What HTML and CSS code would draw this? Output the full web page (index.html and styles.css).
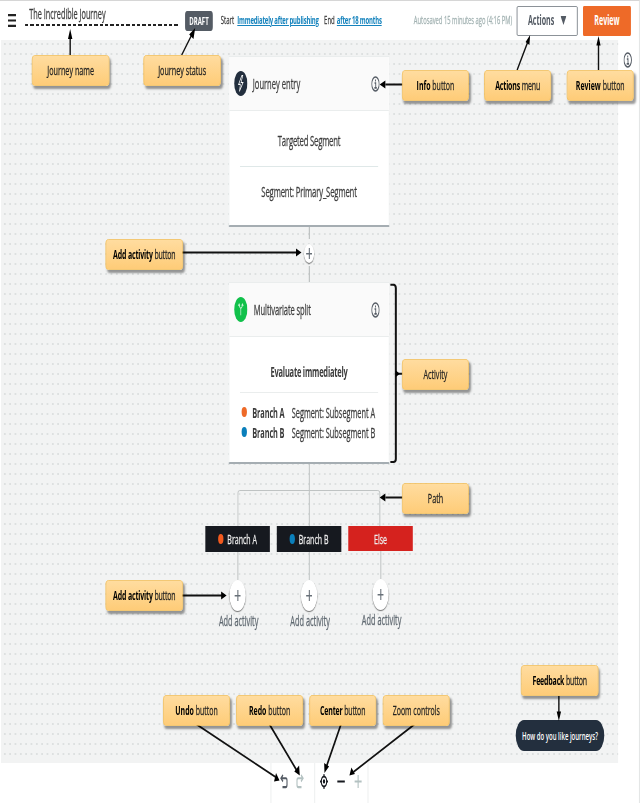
FILE: index.html
```html
<!DOCTYPE html>
<html lang="en">
<head>
<meta charset="utf-8">
<title>The Incredible Journey</title>
<link rel="stylesheet" href="styles.css">
</head>
<body>
<div class="frame">
<div class="stage">
  <header class="topbar">
    <svg class="menu" viewBox="0 0 15 12" preserveAspectRatio="none"><path d="M0 1h15M0 6h15M0 11h15"/></svg>
    <div class="name"><span class="t t-title">The Incredible Journey</span></div>
    <div class="status"><span class="t t-draft">DRAFT</span></div>
    <div class="schedule"><span class="t t-start">Start</span><a class="t t-imm">Immediately after publishing</a><span class="t t-end">End</span><a class="t t-after">after 18 months</a></div>
    <div class="saved"><span class="t t-saved">Autosaved 15 minutes ago (4:16 PM)</span></div>
    <button class="btn actions"><span class="t t-actions">Actions</span><svg class="caret" viewBox="0 0 12 9" preserveAspectRatio="none"><path d="M0 0h12L6 9z"/></svg></button>
    <button class="btn review"><span class="t t-review">Review</span></button>
  </header>

  <main class="canvas">
    <section class="card entry">
      <div class="card-head">
        <svg class="badge" viewBox="0 0 24 24"><circle cx="12" cy="12" r="12" fill="#232f3e"/><path d="M13.800 4.500 8 12.800h3.200L9.600 19.500 16 11h-3.500l3-6.500z" fill="none" stroke="#fff" stroke-width="1.100"/></svg>
        <span class="t t-entry">Journey entry</span>
        <svg class="info" viewBox="0 0 16 16"><circle cx="8" cy="8" r="7"/><path d="M6.300 7H8.500v4.700M6 11.800h4.500M8 3.600v1.800"/></svg>
      </div>
      <div class="row target"><span class="t t-target">Targeted Segment</span></div>
      <div class="row segment"><span class="t t-segment">Segment: Primary_Segment</span></div>
    </section>
    <div class="joint"><i class="plus small"></i></div>
    <section class="card split">
      <div class="card-head">
        <svg class="badge" viewBox="0 0 24 24"><circle cx="12" cy="12" r="12" fill="#11c14b"/><path d="M12 17.500V11M12 11C11 10.500 9.500 10.500 9 7.500M12 11c1-.5 2.500-.5 3-3.500M7.500 8.500 9 6.800l1.500 1.500M16.500 8.500 15 6.800l-1.500 1.500" fill="none" stroke="#c9f5d6" stroke-width="1.300"/></svg>
        <span class="t t-multi">Multivariate split</span>
        <svg class="info" viewBox="0 0 16 16"><circle cx="8" cy="8" r="7"/><path d="M6.300 7H8.500v4.700M6 11.800h4.500M8 3.600v1.800"/></svg>
      </div>
      <div class="row evaluate"><span class="t t-eval">Evaluate immediately</span></div>
      <ul class="branches">
        <li><i class="dot orange"></i><b class="t t-branch">Branch A</b><span class="t t-sub">Segment: Subsegment A</span></li>
        <li><i class="dot blue"></i><b class="t t-branch">Branch B</b><span class="t t-sub">Segment: Subsegment B</span></li>
      </ul>
    </section>
    <svg class="paths" viewBox="0 0 144 62" preserveAspectRatio="none"><path d="M.5 62V29Q.5 26.500 2.500 26.500H140.500Q142.500 26.500 142.500 29V62M72 0V62"/></svg>
    <div class="outcomes">
      <div class="outcome"><div class="tag"><i class="dot bright"></i><span class="t t-tag">Branch A</span></div><i class="stem"></i><i class="plus"></i><span class="t t-add">Add activity</span></div>
      <div class="outcome"><div class="tag"><i class="dot blue"></i><span class="t t-tag">Branch B</span></div><i class="stem"></i><i class="plus"></i><span class="t t-add">Add activity</span></div>
      <div class="outcome"><div class="tag else"><span class="t t-else">Else</span></div><i class="stem"></i><i class="plus"></i><span class="t t-add">Add activity</span></div>
    </div>
  </main>

  <svg class="info side" viewBox="0 0 16 16"><circle cx="8" cy="8" r="7"/><path d="M6.300 7H8.500v4.700M6 11.800h4.500M8 3.600v1.800"/></svg>

  <footer class="tools">
    <div class="history">
      <svg class="tool" viewBox="0 0 16 16"><path d="M6 1 2 4.500 6 8M2.500 4.500H11.500Q14 4.500 14 7V11.500Q14 14 11.500 14H5" stroke="#545b64"/></svg>
      <svg class="tool" viewBox="0 0 16 16"><path d="M10 1 14 4.500 10 8M13.500 4.500H4.500Q2 4.500 2 7V11.500Q2 14 4.500 14H11" stroke="#b3c1c1"/></svg>
    </div>
    <div class="view">
      <svg class="tool" viewBox="0 0 16 16"><circle cx="8" cy="8" r="5.400" stroke="#16191f"/><circle cx="8" cy="8" r="1.200" fill="#16191f" stroke="#16191f"/><path d="M8 0v3M8 13v3M0 8h3M13 8h3" stroke="#16191f"/></svg>
      <svg class="tool" viewBox="0 0 16 16"><path d="M.5 8h15" stroke="#16191f"/></svg>
      <svg class="tool" viewBox="0 0 16 16"><path d="M1 8h14M8 1v14" stroke="#b3c1c1"/></svg>
    </div>
  </footer>

  <div class="feedback"><span class="t t-fb">How do you like journeys?</span></div>

  <svg class="arrows" viewBox="0 0 640 803" preserveAspectRatio="none">
    <path d="M70.300 55V36M182 55 192.500 34M518 70 529 41M599.500 70V42"/>
    <path d="M559.800 696V714"/>
    <path class="thick" d="M403 84.500H386M182 252.500H298M182 595.500H225M403 497.500H386"/>
    <path class="mid" d="M197 724.500 276 777M270 724.500 297 770M341.500 724.500 326.500 768M415 724.500 354 772"/>
    <path class="thick" d="M391 284.800H394Q396.500 285 396.500 288V459Q396.500 462 394 462H391M396.500 373.700H403"/>
    <path class="tip" d="M70.300 29 72.500 39H68.100zM195.500 28 193.800 39 189.500 34.500zM531 35 530.300 45 526.500 42zM599.500 36 601.600 45.500H597.400zM559.800 721 557.600 711.500H562zM380.300 84.500 386 80.500V88.500zM302 252.500 296.500 248.500V256.500zM227 595.500 221.500 591.500V599.500zM380.300 497.500 386 493.500V501.500zM280 780.500 274.500 781.500 276.500 773zM300.300 775.500 294.800 771.500 299.600 765.500zM325 773 324.700 763 329.600 766.500zM350 775.500 352 767.500 355.500 774z"/>
    <path class="tip" d="M396.500 370.500 400.500 373.700 396.500 377z"/>
  </svg>

  <div class="note plain w2 n-name"><span class="t">Journey name</span></div>
  <div class="note plain w2 n-status"><span class="t">Journey status</span></div>
  <div class="note n-info"><span class="t"><b>Info</b> button</span></div>
  <div class="note snug n-actions"><span class="t"><b>Actions</b> menu</span></div>
  <div class="note n-review"><span class="t"><b>Review</b> button</span></div>
  <div class="note snug w2 n-add1"><span class="t"><b>Add activity</b> button</span></div>
  <div class="note plain n-activity"><span class="t">Activity</span></div>
  <div class="note plain n-path"><span class="t">Path</span></div>
  <div class="note snug w2 n-add2"><span class="t"><b>Add activity</b> button</span></div>
  <div class="note n-undo"><span class="t"><b>Undo</b> button</span></div>
  <div class="note n-redo"><span class="t"><b>Redo</b> button</span></div>
  <div class="note snug n-center"><span class="t"><b>Center</b> button</span></div>
  <div class="note n-zoom"><span class="t">Zoom controls</span></div>
  <div class="note snug w2 n-feedback"><span class="t"><b>Feedback</b> button</span></div>
</div>
</div>
</body>
</html>
```
FILE: styles.css
```css
* { box-sizing: border-box; }
body { margin: 0; background: #fff; }
.frame { width: 640px; height: 803px; overflow: clip; contain: paint; }

/* The whole view is drawn 1200px wide and condensed to 640px. */
.stage {
  position: relative;
  width: 1200px;
  height: 803px;
  transform: scaleX(.533333);
  transform-origin: 0 0;
  border-top: 1px solid #d6d6d6;
  border-right: 2px solid #e4e6e6;
  font-family: "Open Sans", "Noto Sans", sans-serif;
  color: #3c3c3c;
}
.t { white-space: nowrap; -webkit-text-stroke: .28px currentColor; }
b.t, a.t, .t b, .btn .t, .status .t, .evaluate .t, .t-fb { -webkit-text-stroke-width: 0; }

.topbar { display: flex; align-items: center; height: 39px; padding-left: 15px; }
.menu { width: 15px; height: 13px; stroke: #222; stroke-width: 2; }
.name {
  width: 287px; height: 22px; margin: -12px 0 0 17px; padding-left: 8px;
  font-size: 13.700px; line-height: 18px;
  background: repeating-linear-gradient(90deg, #222 0 6px, transparent 6px 10px) 0 100% / 100% 2px no-repeat;
}
.name .t { position: relative; top: 1px; }
.status {
  display: flex; align-items: center; justify-content: center;
  width: 52px; height: 20px; margin-left: 13px; padding-bottom: 1px;
  border-radius: 4px; background: #545b64; color: #fff; font-size: 11.400px; font-weight: 700;
}
.schedule { display: flex; gap: 4px; width: 302px; margin-left: 15px; padding-bottom: 2px; font-size: 11.200px; line-height: 14px; }
.schedule a { color: #1583bd; font-weight: 700; text-decoration: underline; letter-spacing: -.35px; }
.t-imm { margin-left: 2px; }
.t-end { margin-left: 6px; }
.saved { width: 186px; margin-left: 60px; padding-bottom: 2px; color: #a2b2b2; font-size: 10.900px; }
.btn {
  display: flex; align-items: center; justify-content: center; height: 30px; padding: 0 0 1px;
  border: 0; border-radius: 2px; font: 700 13.300px "Open Sans", sans-serif;
}
.actions { width: 114px; margin-left: 7px; gap: 12px; border: 1.500px solid #687078; background: #fff; color: #545b64; }
.caret { width: 11px; height: 9px; fill: #545b64; }
.review { width: 90px; margin-left: 10px; background: #ee6a28; color: #fff; }

.canvas {
  width: 1157px; height: 723px; margin-left: 2px; padding: 16px 0 0 427px;
  background: radial-gradient(circle at 5px 5px, #dde0e0 1px, transparent 1.500px) 2px 9px / 10px 10px, #f2f3f3;
}
.card { width: 301px; background: #fff; border: 1px solid #eaeded; border-bottom: 2px solid #a5adb2; }
.entry { height: 171px; }
.split { height: 182px; }
.card-head {
  display: flex; align-items: center; height: 54px; padding: 0 17px 0 9px;
  background: #fafafa; border-bottom: 1px solid #eaeded; font-size: 14.200px;
}
.badge { width: 25px; height: 25px; margin-right: 10px; }
.t-multi { margin-left: 2px; letter-spacing: -.2px; }
.info { width: 16px; height: 16px; margin-left: auto; fill: none; stroke: #545b64; stroke-width: 1.700; }
.side { position: absolute; left: 1169px; top: 51px; }
.row { display: flex; align-items: center; justify-content: center; margin: 0 20px; font-size: 14.500px; }
.target { height: 56px; padding-top: 4px; border-bottom: 1px solid #dfe8e8; letter-spacing: -.4px; }
.segment { height: 49px; letter-spacing: -.3px; }
.joint {
  display: flex; align-items: center; justify-content: center; width: 301px; height: 55px; padding-bottom: 2px;
  background: linear-gradient(#b8bcbc 0 12px, transparent 12px 39px, #b8bcbc 39px) 150px 0 / 2px 100% no-repeat;
}
.plus {
  display: block; width: 31px; height: 31px; border-radius: 50%;
  background: linear-gradient(#687078, #687078) center / 11px 1.500px no-repeat, linear-gradient(#687078, #687078) center / 2px 11px no-repeat, #fff;
  box-shadow: 0 1px 1.500px #0008;
}
.small { width: 19px; height: 19px; }
.evaluate { height: 56px; padding-top: 14px; border-bottom: 1px solid #eaeded; font-weight: 700; font-size: 14px; letter-spacing: -.4px; }
.branches { margin: 9px 0 0 23px; padding: 0; list-style: none; font-size: 13.800px; }
.branches li { display: flex; align-items: center; height: 20px; }
.branches b { width: 60px; letter-spacing: -.2px; }
.t-sub { margin-left: 14px; }
.dot { width: 10px; height: 10px; margin-right: 10px; border-radius: 50%; }
.orange { background: #ee6a28; }
.bright { background: #f35a1e; }
.blue { background: #0a7fbb; }
.paths { display: block; width: 270px; height: 62px; margin-left: 16px; fill: none; stroke: #bfc3c3; stroke-width: 1; }
.outcomes { display: grid; grid-template-columns: repeat(3, 121px); gap: 13px; margin-left: -44px; }
.outcome { display: flex; flex-direction: column; align-items: center; }
.tag { display: flex; align-items: center; justify-content: center; width: 121px; height: 26px; background: #16191f; color: #eee; font-size: 13.200px; }
.tag .dot { margin-right: 7px; }
.else { height: 25px; background: #d5221e; }
.stem { width: 2px; height: 28px; background: #c3c7c7; }
.t-add { margin-left: 4px; color: #5f6870; font-size: 13.800px; }

.tools { display: flex; height: 40px; margin-left: 507px; }
.history, .view { display: flex; align-items: center; padding-bottom: 3px; border-left: 2px solid #eef0f0; }
.history { width: 82px; padding-left: 15px; gap: 13px; }
.view { width: 102px; padding-left: 8px; gap: 15px; border-right: 2px solid #eef0f0; }
.tool { width: 17px; height: 15px; fill: none; stroke-width: 2.200; }

.feedback {
  position: absolute; left: 967px; top: 719px; display: flex; align-items: center; justify-content: center;
  width: 166px; height: 31px; padding-bottom: 1px; border-radius: 16px; background: #232f3e; color: #fff; font-size: 11.300px; font-weight: 600;
}
.arrows { position: absolute; left: 0; top: -1px; width: 1198px; height: 803px; fill: none; stroke: #111; stroke-width: 1.400; }
.arrows .thick { stroke-width: 2; }
.arrows .mid { stroke-width: 1.700; }
.arrows .tip { fill: #000; stroke: none; }

.note {
  position: absolute; display: flex; align-items: center; justify-content: center;
  width: 125px; height: 31px; padding-bottom: 2px; border: 1.500px solid #f3bb4d; border-radius: 5px;
  background: linear-gradient(#ffdc9f, #fecc78); box-shadow: 3px 3px 3px #0006;
  color: #222; font-size: 13.100px;
}
.note b { color: #000; }
.plain { font-size: 13.500px; }
.snug { letter-spacing: -.3px; }
.w2 { width: 145px; }
.n-name { left: 60px; top: 54px; }
.n-status { left: 269px; top: 54px; }
.n-info { left: 754px; top: 69px; }
.n-actions { left: 908px; top: 69px; }
.n-review { left: 1063px; top: 69px; }
.n-add1 { left: 198px; top: 238px; }
.n-activity { left: 754px; top: 358px; }
.n-path { left: 754px; top: 482px; }
.n-add2 { left: 198px; top: 579px; }
.n-undo { left: 306px; top: 694px; }
.n-redo { left: 443px; top: 694px; }
.n-center { left: 580px; top: 694px; }
.n-zoom { left: 718px; top: 694px; }
.n-feedback { left: 977px; top: 664px; }
```
